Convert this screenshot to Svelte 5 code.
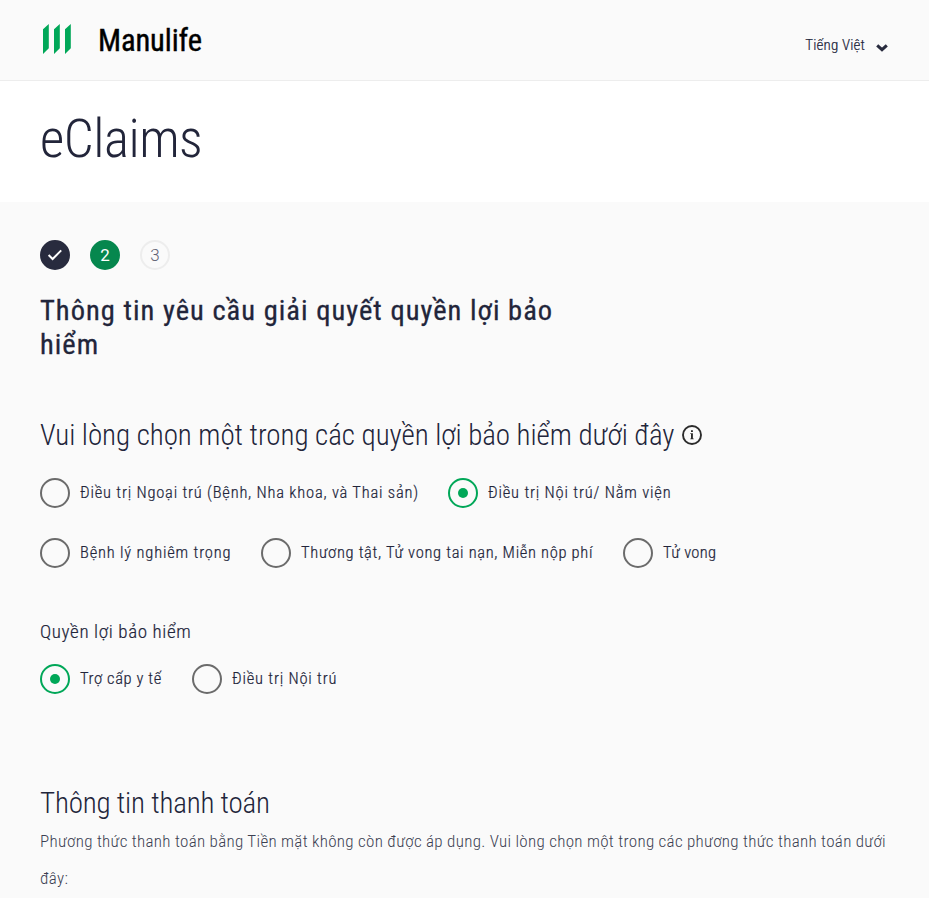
<script>
  let benefit = $state('inpatient');
  let coverage = $state('allowance');

  const benefits = [
    { id: 'outpatient', label: 'Điều trị Ngoại trú (Bệnh, Nha khoa, và Thai sản)', width: 338, spacing: 0.79 },
    { id: 'inpatient', label: 'Điều trị Nội trú/ Nằm viện', width: 183, spacing: 0.81 },
    { id: 'critical', label: 'Bệnh lý nghiêm trọng', width: 151, spacing: 0.81 },
    { id: 'accident', label: 'Thương tật, Tử vong tai nạn, Miễn nộp phí', width: 292, spacing: 0.68 },
    { id: 'death', label: 'Tử vong', width: 54, spacing: 0.35 }
  ];
  const coverages = [
    { id: 'allowance', label: 'Trợ cấp y tế', width: 82, spacing: 0.6 },
    { id: 'treatment', label: 'Điều trị Nội trú', width: 106, spacing: 0.79 }
  ];
</script>

{#snippet option(item, checked, select)}
  <button class="option" class:checked role="radio" aria-checked={checked} onclick={select}>
    <span class="ring"></span>
    <span class="label" style="width: {item.width}px; letter-spacing: {item.spacing}px">{item.label}</span>
  </button>
{/snippet}

<div class="page">
  <header>
    <div class="brand">
      <svg width="30" height="32" viewBox="0 0 30 32" fill="#00a758">
        <path d="M1 6.200 6.800 1v24.200L1 31zM12 6.200 17.800 1v24.200L12 31zM23 6.200 28.800 1v24.200L23 31z" />
      </svg>
      <span class="name">Manulife</span>
    </div>
    <div class="language">
      <span>Tiếng Việt</span>
      <svg width="12" height="8" viewBox="0 0 12 8" fill="none" stroke="#282b3e" stroke-width="3">
        <path d="M1.2 1.3 6 5.7l4.8-4.4" />
      </svg>
    </div>
  </header>

  <div class="hero"><h1>eClaims</h1></div>

  <main>
    <div class="steps">
      <span class="step done">
        <svg width="16" height="12" viewBox="0 0 16 12" fill="none" stroke="#fff" stroke-width="2">
          <path d="m1.6 6 4 4L14.200 1.400" />
        </svg>
      </span>
      <span class="step current">2</span>
      <span class="step">3</span>
    </div>

    <h2>Thông tin yêu cầu giải quyết quyền lợi bảo hiểm</h2>

    <h3 class="question">
      <span>Vui lòng chọn một trong các quyền lợi bảo hiểm dưới đây</span>
      <svg width="20" height="20" viewBox="0 0 20 20">
        <circle cx="10" cy="10" r="9" fill="none" stroke="#2b2b2b" stroke-width="1.9" />
        <path d="M9 5.200h1.900v1.700H9zM8.300 8.200h2.600v5.200h.8v.8H8.300v-.8H9V9h-.7z" fill="#2b2b2b" />
      </svg>
    </h3>

    <div class="options" role="radiogroup">
      {#each benefits as item}
        {@render option(item, benefit === item.id, () => (benefit = item.id))}
      {/each}
    </div>

    <h4>Quyền lợi bảo hiểm</h4>
    <div class="options" role="radiogroup">
      {#each coverages as item}
        {@render option(item, coverage === item.id, () => (coverage = item.id))}
      {/each}
    </div>

    <h3 class="payment">Thông tin thanh toán</h3>
    <p>
      Phương thức thanh toán bằng Tiền mặt không còn được áp dụng. Vui lòng chọn một trong các
      phương thức thanh toán dưới đây:
    </p>
  </main>
</div>

<style>
  :global(body) {
    margin: 0;
    background: #fafafa;
  }
  .page {
    height: 898px;
    overflow: hidden;
    background: #fafafa;
    color: #22253a;
    font-family: Roboto, 'Liberation Sans', sans-serif;
    font-stretch: 75%;
    font-weight: 300;
  }
  header {
    display: flex;
    justify-content: space-between;
    box-sizing: border-box;
    height: 81px;
    padding: 0 41px 0 42px;
    border-bottom: 1px solid #ededed;
  }
  .brand {
    display: flex;
    gap: 26px;
    padding-top: 23px;
  }
  .name {
    color: #000;
    font-size: 30.500px;
    font-weight: 400;
    line-height: 35px;
    letter-spacing: -0.1px;
    -webkit-text-stroke: 0.4px #000;
  }
  .language {
    display: flex;
    gap: 11px;
    padding-top: 35px;
    font-size: 15px;
    line-height: 20px;
    letter-spacing: 0.15px;
    -webkit-text-stroke: 0.2px;
  }
  .language svg {
    margin-top: 9px;
  }
  .hero {
    height: 121px;
    background: #fff;
  }
  h1,
  h2,
  h3,
  h4,
  p {
    margin: 0;
    font-weight: 300;
  }
  h1 {
    padding: 28px 40px 0;
    font-size: 53px;
    line-height: 60px;
    letter-spacing: -0.5px;
  }
  main {
    padding: 38px 40px 0;
  }
  .steps {
    display: flex;
    gap: 20px;
  }
  .step {
    display: grid;
    place-items: center;
    box-sizing: border-box;
    width: 30px;
    height: 30px;
    border: 2px solid #ededed;
    border-radius: 50%;
    color: #5e6073;
    font-size: 17px;
    font-stretch: 90%;
    line-height: 26px;
  }
  .done {
    border-color: #282b3e;
    background: #282b3e;
  }
  .current {
    border-color: #06874e;
    background: #06874e;
    color: #fff;
    font-weight: 400;
  }
  h2 {
    width: 560px;
    margin-top: 24px;
    font-size: 28.500px;
    font-weight: 400;
    line-height: 34px;
    letter-spacing: 1.03px;
    -webkit-text-stroke: 0.3px;
  }
  .question {
    display: flex;
    align-items: center;
    gap: 8px;
    margin-top: 56px;
    font-size: 29px;
    line-height: 34px;
    letter-spacing: -0.03px;
    white-space: nowrap;
  }
  .options {
    display: flex;
    flex-wrap: wrap;
    gap: 30px;
    margin-top: 26px;
  }
  .option {
    display: flex;
    gap: 10px;
    padding: 0;
    border: 0;
    background: none;
    color: inherit;
    font: inherit;
    font-stretch: inherit;
    text-align: left;
  }
  .ring {
    display: grid;
    place-items: center;
    box-sizing: border-box;
    width: 30px;
    height: 30px;
    border: 2px solid #6b6b6b;
    border-radius: 50%;
  }
  .checked .ring {
    border-color: #00a758;
  }
  .checked .ring::after {
    content: '';
    width: 10px;
    height: 10px;
    border-radius: 50%;
    background: #00a758;
  }
  .label {
    font-size: 16.500px;
    line-height: 29px;
    white-space: nowrap;
    -webkit-text-stroke: 0.2px;
  }
  h4 {
    margin-top: 52px;
    font-size: 19px;
    line-height: 24px;
    letter-spacing: 0.63px;
    -webkit-text-stroke: 0.2px;
  }
  h4 + .options {
    margin-top: 20px;
  }
  .payment {
    margin-top: 92px;
    font-size: 29px;
    line-height: 34px;
    letter-spacing: -0.18px;
  }
  p {
    margin: 3px -10px 0 0;
    color: #3c3f52;
    font-size: 17px;
    line-height: 37px;
    letter-spacing: 0.3px;
  }
</style>
